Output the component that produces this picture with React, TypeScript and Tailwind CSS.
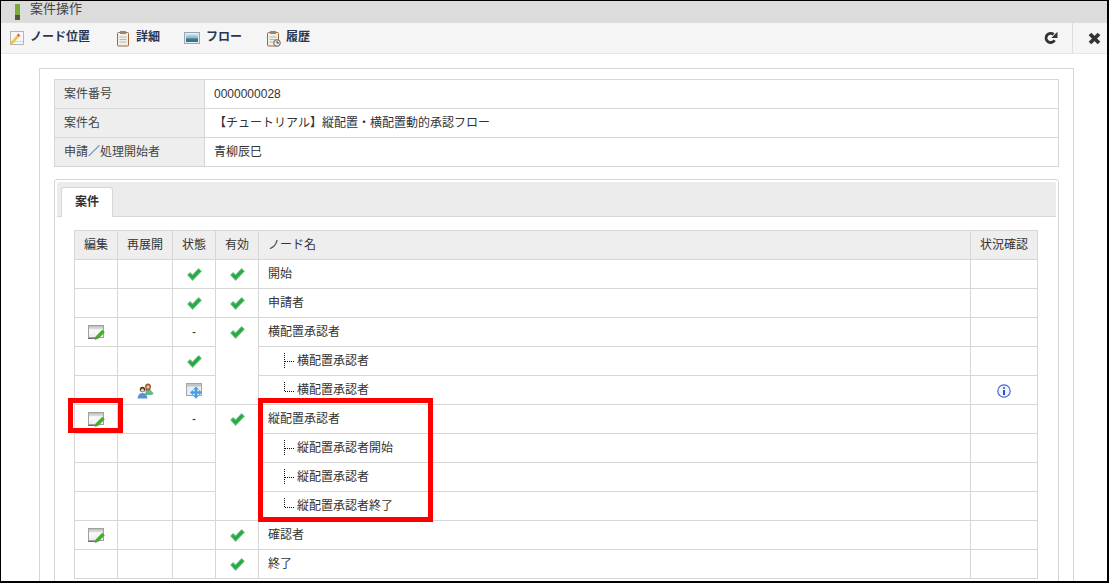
import React from 'react'

function Check() {
  return (
    <svg width="15" height="13" viewBox="0 0 15 13" className="inline-block align-middle">
      <path d="M0.5 7 L3 4.4 L5.6 6.8 L11.6 0.5 L14.5 3.2 L5.6 12.6 Z" fill="#3cb95a" stroke="#5aa86e" strokeWidth="0.5" />
      <path d="M2.6 6.8 L5.6 9.6 L12.4 2.4" fill="none" stroke="#1fa23a" strokeWidth="1.4" />
    </svg>
  )
}

function EditIcon() {
  return (
    <svg width="17" height="15" viewBox="0 0 17 15" className="inline-block align-middle">
      <defs>
        <linearGradient id="win" x1="0" y1="0" x2="0" y2="1">
          <stop offset="0" stopColor="#b8b8b8" />
          <stop offset="0.28" stopColor="#dedede" />
          <stop offset="0.36" stopColor="#fbfbfb" />
          <stop offset="1" stopColor="#ececec" />
        </linearGradient>
      </defs>
      <rect x="0.5" y="0.5" width="15" height="12" fill="url(#win)" stroke="#a0a0a0" />
      <path d="M0 13 H7 V14 H0 Z" fill="#6f6f6f" />
      <path d="M7 14.5 L8.2 11.2 L14.2 5 L16.5 7.2 L10.4 13.4 Z" fill="#43b02a" stroke="#3a9a3a" strokeWidth="0.4" />
      <path d="M7 14.5 L7.7 12.4 L9.2 13.8 Z" fill="#8a7a4a" />
    </svg>
  )
}

function MoveIcon() {
  return (
    <svg width="17" height="16" viewBox="0 0 17 16" className="inline-block align-middle">
      <rect x="0.5" y="0.5" width="15" height="12" fill="#e9edf1" stroke="#a5a5a5" />
      <rect x="1" y="1" width="14" height="2.5" fill="#c4c4c4" />
      <path d="M10 3.5 L13 6.5 H11.3 V8.2 H13 V6.8 L16 9.5 L13 12.2 V10.8 H11.3 V12.5 H13 L10 15.8 L7 12.5 H8.7 V10.8 H7 V12.2 L4 9.5 L7 6.8 V8.2 H8.7 V6.5 H7 Z" fill="#4a9fe6" />
    </svg>
  )
}

function UsersIcon() {
  return (
    <svg width="17" height="16" viewBox="0 0 17 16" className="inline-block align-middle">
      <circle cx="11" cy="3.3" r="2.9" fill="#a5562c" />
      <path d="M8.6 3 H13.4 V8.5 H8.6 Z" fill="#a5562c" />
      <circle cx="11" cy="4" r="1.7" fill="#eebf98" />
      <path d="M8 12 Q8.5 7 11 7 Q15 7 16.7 11 L14 12 Z" fill="#5fb98a" />
      <circle cx="5.5" cy="6.5" r="2.7" fill="#44372f" />
      <circle cx="5.5" cy="7.2" r="1.7" fill="#eec6a4" />
      <path d="M0.5 15.5 Q1 10 5.5 10 Q10 10 10.5 15.5 Z" fill="#5b92d1" />
    </svg>
  )
}

function InfoIcon() {
  return (
    <svg width="14" height="14" viewBox="0 0 14 14" className="inline-block align-middle">
      <circle cx="7" cy="7" r="6.2" fill="#f2f5fd" stroke="#4668d8" strokeWidth="1.2" />
      <circle cx="7" cy="4" r="1" fill="#2f4fc0" />
      <rect x="6" y="6" width="2" height="5" fill="#2f4fc0" />
    </svg>
  )
}

function Tree({ last }: { last?: boolean }) {
  return (
    <svg width="13" height="18" viewBox="0 0 13 18" className="shrink-0" shapeRendering="crispEdges">
      <path d={last ? 'M1.5 1 V11' : 'M1.5 1 V16'} fill="none" stroke="#111" strokeDasharray="1 1" />
      <path d={last ? 'M2 10.5 H11' : 'M2 9.5 H11'} fill="none" stroke="#111" strokeDasharray="1 1" />
    </svg>
  )
}

function PencilDoc() {
  return (
    <svg width="16" height="16" viewBox="0 0 16 16">
      <rect x="1.5" y="1.5" width="13" height="13" fill="#f6f6f6" stroke="#b5b5b5" />
      <path d="M2 11.5 H14" stroke="#d5d5d5" />
      <path d="M1 15 L2 12 L8 5 L10 7 L4 13.5 Z" fill="#eec53f" />
      <path d="M8 5 L9.2 3.6 L11.2 5.6 L10 7 Z" fill="#d9534f" />
    </svg>
  )
}

function Clipboard({ clock }: { clock?: boolean }) {
  return (
    <svg width="15" height="17" viewBox="0 0 15 17">
      <rect x="1.5" y="2.5" width="11" height="13.5" rx="1" fill="#f4efe6" stroke="#a5683a" />
      <rect x="4" y="1" width="6" height="3" fill="#8a8a8a" />
      <path d="M3.5 7 H10.5 M3.5 9.5 H10.5 M3.5 12 H10.5" stroke="#a9c0b0" />
      {clock && <circle cx="11" cy="13" r="3.3" fill="#e8e8e8" stroke="#666" />}
      {clock && <path d="M11 11 V13 H13" fill="none" stroke="#444" />}
    </svg>
  )
}

function PictureIcon() {
  return (
    <svg width="16" height="12" viewBox="0 0 16 12">
      <defs>
        <linearGradient id="sky" x1="0" y1="0" x2="0" y2="1">
          <stop offset="0" stopColor="#cfe6f6" />
          <stop offset="0.5" stopColor="#7fb6da" />
          <stop offset="0.6" stopColor="#3f7d7a" />
          <stop offset="1" stopColor="#2f6f8a" />
        </linearGradient>
      </defs>
      <rect x="0.5" y="0.5" width="15" height="11" fill="#e8eef2" stroke="#9aa5ad" />
      <rect x="2" y="2" width="12" height="8" fill="url(#sky)" />
    </svg>
  )
}

function Reload() {
  return (
    <svg width="14" height="14" viewBox="0 0 14 14" fill="none">
      <path d="M10.6 9.2 A4.6 4.6 0 1 1 9.6 3.4" stroke="#333" strokeWidth="2.8" />
      <path d="M13.5 0.8 V7 H7.3 Z" fill="#333" />
    </svg>
  )
}

function Close() {
  return (
    <svg width="13" height="13" viewBox="0 0 13 13">
      <path d="M2 2 L11 11 M11 2 L2 11" stroke="#333" strokeWidth="3.8" />
    </svg>
  )
}

const tools = [
  { label: 'ノード位置', icon: <PencilDoc />, cls: 'gap-[5px] mr-[2px]' },
  { label: '詳細', icon: <Clipboard />, cls: 'gap-[5px]' },
  { label: 'フロー', icon: <PictureIcon />, cls: 'gap-[6px]' },
  { label: '履歴', icon: <Clipboard clock />, cls: 'gap-[5px]' },
]

const info = [
  ['案件番号', '0000000028'],
  ['案件名', '【チュートリアル】縦配置・横配置動的承認フロー'],
  ['申請／処理開始者', '青柳辰巳'],
]

type Row = {
  name: string
  depth?: 'mid' | 'last'
  edit?: boolean
  reopen?: boolean
  state?: 'check' | 'dash' | 'move'
  valid?: number
  hideValid?: boolean
  info?: boolean
}

const rows: Row[] = [
  { name: '開始', state: 'check', valid: 1 },
  { name: '申請者', state: 'check', valid: 1 },
  { name: '横配置承認者', edit: true, state: 'dash', valid: 3 },
  { name: '横配置承認者', depth: 'mid', state: 'check', hideValid: true },
  { name: '横配置承認者', depth: 'last', reopen: true, state: 'move', hideValid: true, info: true },
  { name: '縦配置承認者', edit: true, state: 'dash', valid: 4 },
  { name: '縦配置承認者開始', depth: 'mid', hideValid: true },
  { name: '縦配置承認者', depth: 'mid', hideValid: true },
  { name: '縦配置承認者終了', depth: 'last', hideValid: true },
  { name: '確認者', edit: true, valid: 1 },
  { name: '終了', valid: 1 },
]

const cell = 'border border-[#d6d6d6] h-[29px] p-0 text-center align-middle'
const head = 'border border-[#d6d6d6] h-[29px] p-0 bg-[#eeeeee] font-normal text-center'

export default function App() {
  return (
    <div className="relative w-[1109px] h-[583px] overflow-hidden border-t border-l border-r-2 border-b-2 border-black bg-white text-[12px] text-[#333] [font-family:'Liberation_Sans','Noto_Sans_CJK_JP',sans-serif]">
      <div className="flex items-center h-[22px] bg-[#dcdcdc] pl-[14px]">
        <div className="flex flex-col w-[5px] h-[16px] mr-[10px]">
          <div className="h-[11px] bg-[#7cab3c]" />
          <div className="h-[5px] bg-[#4c5a3c]" />
        </div>
        <span className="text-[13px] text-[#444] mb-[6px]">案件操作</span>
      </div>

      <div className="flex items-center h-[31px] bg-[#f5f5f5] border-b border-[#e6e6e6]">
        <div className="flex items-center pl-[8px] gap-[24px] font-bold text-[#2a3550]">
          {tools.map((t) => (
            <div key={t.label} className={`flex items-center ${t.cls}`}>
              {t.icon}
              <span className="mb-[2px]">{t.label}</span>
            </div>
          ))}
        </div>
        <div className="ml-auto flex items-center justify-end w-[40px] h-full pr-[14px]">
          <Reload />
        </div>
        <div className="flex items-center justify-end w-[35px] h-full border-l border-[#dddddd] pr-[6px]">
          <Close />
        </div>
      </div>

      <div className="ml-[38px] mt-[14px] w-[1035px] border border-[#d6d6d6] px-[14px] pt-[10px] h-[600px]">
        <table className="w-[1005px] table-fixed">
          <tbody>
            {info.map(([k, v]) => (
              <tr key={k}>
                <td className="w-[150px] h-[29px] border border-[#d6d6d6] bg-[#eeeeee] pl-[9px] p-0 text-[#444]">{k}</td>
                <td className="h-[29px] border border-[#d6d6d6] pl-[9px] p-0">{v}</td>
              </tr>
            ))}
          </tbody>
        </table>

        <div className="mt-[12px] w-[1005px] border border-[#d6d6d6] rounded-t-[3px] px-[2px] pt-[2px] h-[500px]">
          <div className="h-[35px] bg-[#ebebeb] border-b border-[#d6d6d6] pl-[4px] pt-[5px] rounded-t-[2px]">
            <div className="flex items-center justify-center w-[52px] h-[30px] pb-[2px] bg-white border border-b-0 border-[#d6d6d6] rounded-t-[3px] font-bold text-[#333]">
              案件
            </div>
          </div>
          <table className="ml-[17px] mt-[13px] w-[964px] table-fixed">
            <thead>
              <tr>
                <th className={`${head} w-[43px]`}>編集</th>
                <th className={`${head} w-[55px]`}>再展開</th>
                <th className={`${head} w-[43px]`}>状態</th>
                <th className={`${head} w-[43px]`}>有効</th>
                <th className={`${head} !text-left pl-[9px]`}>ノード名</th>
                <th className={`${head} w-[67px]`}>状況確認</th>
              </tr>
            </thead>
            <tbody>
              {rows.map((r, i) => (
                <tr key={i}>
                  <td className={cell}>{r.edit && <EditIcon />}</td>
                  <td className={cell}>{r.reopen && <UsersIcon />}</td>
                  <td className={cell}>
                    {r.state === 'check' && <Check />}
                    {r.state === 'move' && <MoveIcon />}
                    {r.state === 'dash' && '-'}
                  </td>
                  {!r.hideValid && (
                    <td rowSpan={r.valid} className={`${cell} !align-top`}>
                      <div className="flex h-[28px] items-center justify-center">
                        <Check />
                      </div>
                    </td>
                  )}
                  <td className={`${cell} !text-left pl-[9px]`}>
                    {r.depth ? (
                      <div className="flex items-center pl-[15px] gap-[1px]">
                        <Tree last={r.depth === 'last'} />
                        <span>{r.name}</span>
                      </div>
                    ) : (
                      r.name
                    )}
                  </td>
                  <td className={cell}>{r.info && <InfoIcon />}</td>
                </tr>
              ))}
            </tbody>
          </table>
        </div>
      </div>

      {/* 赤枠 */}
      <div className="absolute left-[67px] top-[397px] w-[55px] h-[35px] border-[5px] border-[#ff0000]" />
      <div className="absolute left-[257px] top-[397px] w-[175px] h-[124px] border-[5px] border-[#ff0000]" />
    </div>
  )
}
